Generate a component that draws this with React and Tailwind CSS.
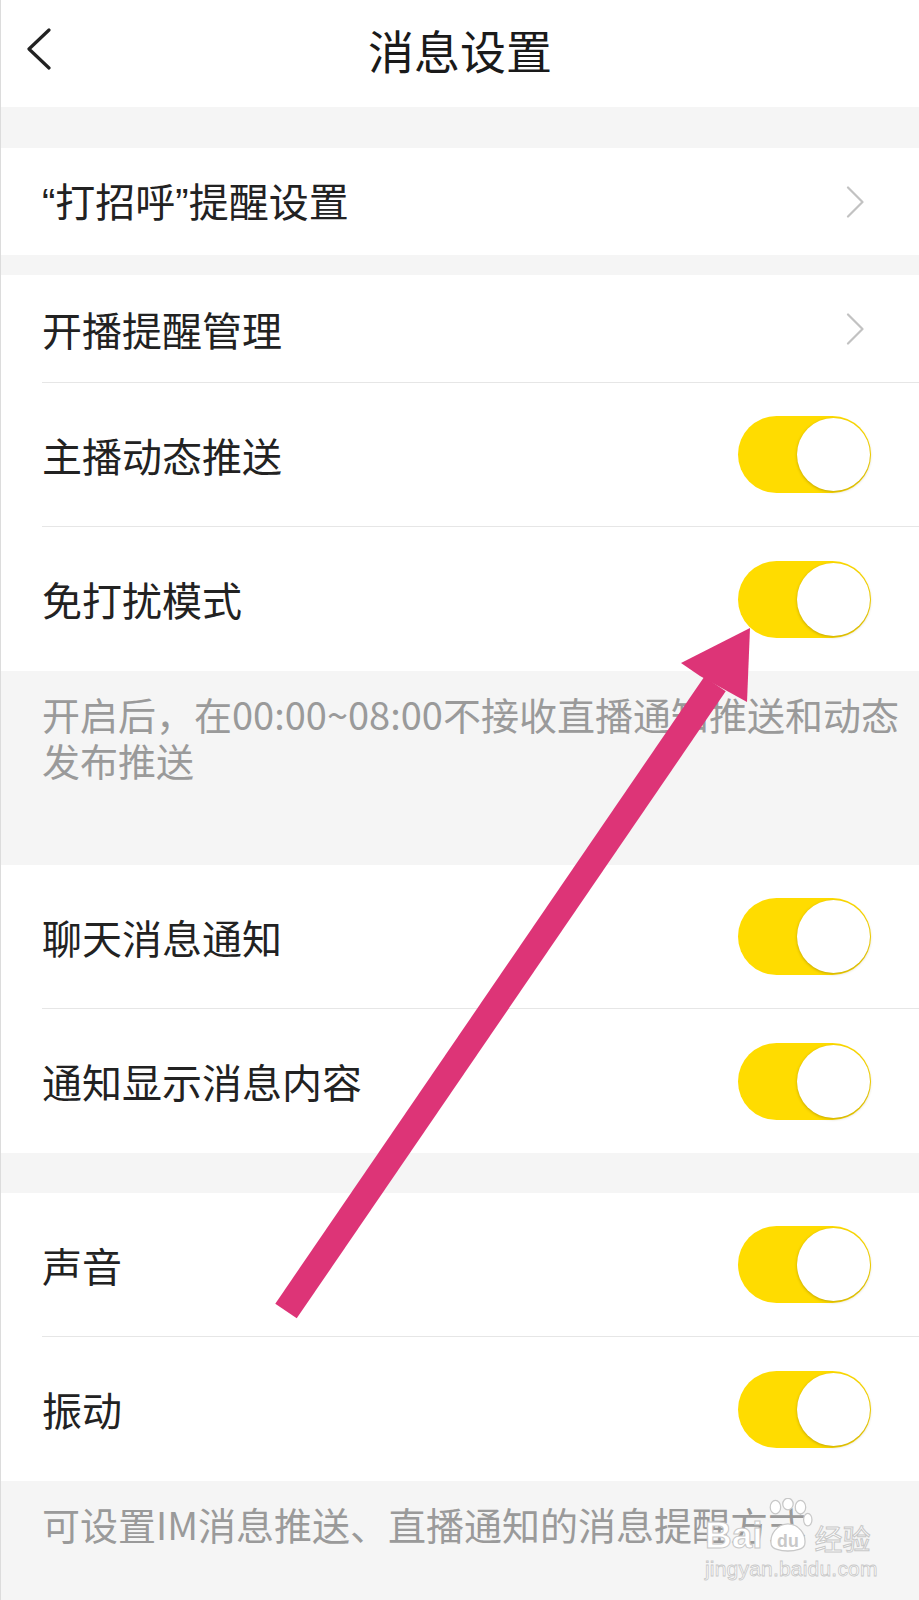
const cjk = "font-['Noto_Sans_CJK_SC','Noto_Sans',sans-serif]";

function Toggle() {
  return (
    <div className="relative w-[133px] h-[77px] rounded-full bg-[#ffdc00] shrink-0">
      <div className="absolute right-[1px] top-[2px] w-[73px] h-[73px] rounded-full bg-white shadow-[0_1px_3px_rgba(120,100,0,0.45)]" />
    </div>
  );
}

function Chevron() {
  return (
    <svg width="19" height="32" viewBox="0 0 19 32" className="shrink-0">
      <path d="M2 1.5 L16.5 16 L2 30.5" fill="none" stroke="#c2c2c2" strokeWidth="2.2" strokeLinecap="round" strokeLinejoin="round" />
    </svg>
  );
}

function LinkRow({ children, height, divider }) {
  return (
    <div className="bg-white pl-[41px]">
      <div className={`flex items-center justify-between pr-[54px] ${height} ${divider ? 'border-b border-[#e6e6e6]' : ''}`}>
        <span className="text-[40px] leading-none text-[#222]">{children}</span>
        <Chevron />
      </div>
    </div>
  );
}

function SwitchRow({ label, divider }) {
  return (
    <div className="bg-white pl-[41px]">
      <div className={`flex items-center justify-between pr-[48px] h-[144px] ${divider ? 'border-b border-[#e6e6e6]' : ''}`}>
        <span className="text-[40px] leading-none text-[#222]">{label}</span>
        <Toggle />
      </div>
    </div>
  );
}

function Watermark() {
  return (
    <div className="absolute left-[704px] top-[1494px] pointer-events-none select-none">
      <div className="flex items-end gap-[2px] h-[60px]">
        <span className="font-['Liberation_Sans',sans-serif] font-bold text-[37px] leading-none text-white [-webkit-text-stroke:1px_#c8c8c8]">
          Bai
        </span>
        <svg width="48" height="58" viewBox="0 0 46 54" className="-mb-[2px]">
          <g fill="white" stroke="#c8c8c8" strokeWidth="1.2">
            <ellipse cx="10" cy="8" rx="5" ry="6.5" />
            <ellipse cx="22" cy="5" rx="5" ry="5.5" />
            <ellipse cx="34" cy="8" rx="5" ry="6.5" />
            <ellipse cx="41" cy="20" rx="4" ry="6" />
            <path d="M6 44 C4 34 12 24 22 24 C32 24 40 34 38 44 C36 52 8 52 6 44 Z" />
          </g>
          <text x="22" y="46" textAnchor="middle" fontFamily="Liberation Sans, sans-serif" fontWeight="700" fontSize="17" fill="#c8c8c8">
            du
          </text>
        </svg>
        <span className={`${cjk} text-[28px] leading-none text-white [-webkit-text-stroke:1px_#c8c8c8] mb-[2px]`}>
          经验
        </span>
      </div>
      <div className="font-['Liberation_Sans',sans-serif] text-[21px] leading-none mt-[4px] text-white [-webkit-text-stroke:0.8px_#c8c8c8] tracking-[0.2px]">
        jingyan.baidu.com
      </div>
    </div>
  );
}

function Arrow() {
  return (
    <svg
      className="absolute inset-0 pointer-events-none"
      width="919"
      height="1600"
      viewBox="0 0 919 1600"
    >
      <line x1="285" y1="1311" x2="714" y2="684" stroke="#dd3477" strokeWidth="26" />
      <polygon points="749,628 680,663 699,676 746,702" fill="#dd3477" />
    </svg>
  );
}

export default function App() {
  const q = "font-['Liberation_Sans',sans-serif]";
  return (
    <div className={`relative w-[919px] h-[1600px] overflow-hidden bg-[#f5f5f5] border-l border-[#dcdcdc] ${cjk}`}>
      {/* Header */}
      <div className="grid grid-cols-[1fr_auto_1fr] items-center h-[107px] pb-[9px] bg-white">
        <button className="justify-self-start pl-[25px]">
          <svg width="26" height="42" viewBox="0 0 26 42">
            <path d="M23 2 L3 21 L23 40" fill="none" stroke="#222" strokeWidth="3.2" strokeLinecap="round" strokeLinejoin="round" />
          </svg>
        </button>
        <h1 className="text-[46px] leading-none font-normal text-[#1a1a1a]">消息设置</h1>
        <div />
      </div>

      <div className="h-[41px]" />
      <LinkRow height="h-[107px]">
        <span className={q}>“</span>打招呼<span className={q}>”</span>提醒设置
      </LinkRow>
      <div className="h-[20px]" />
      <LinkRow height="h-[108px]" divider>开播提醒管理</LinkRow>
      <SwitchRow label="主播动态推送" divider />
      <SwitchRow label="免打扰模式" />

      {/* DND note */}
      <div className="h-[194px] pl-[41px] pr-[12px] pt-[20px] text-[38px] leading-[46px] text-[#9a9a9a]">
        开启后，在00:00~08:00不接收直播通知推送和动态
        <br />
        发布推送
      </div>

      <SwitchRow label="聊天消息通知" divider />
      <SwitchRow label="通知显示消息内容" />
      <div className="h-[40px]" />
      <SwitchRow label="声音" divider />
      <SwitchRow label="振动" />

      <div className="pl-[41px] pt-[20px] text-[38px] leading-[46px] text-[#9a9a9a]">
        可设置IM消息推送、直播通知的消息提醒方式
      </div>

      <Arrow />
      <Watermark />
    </div>
  );
}
